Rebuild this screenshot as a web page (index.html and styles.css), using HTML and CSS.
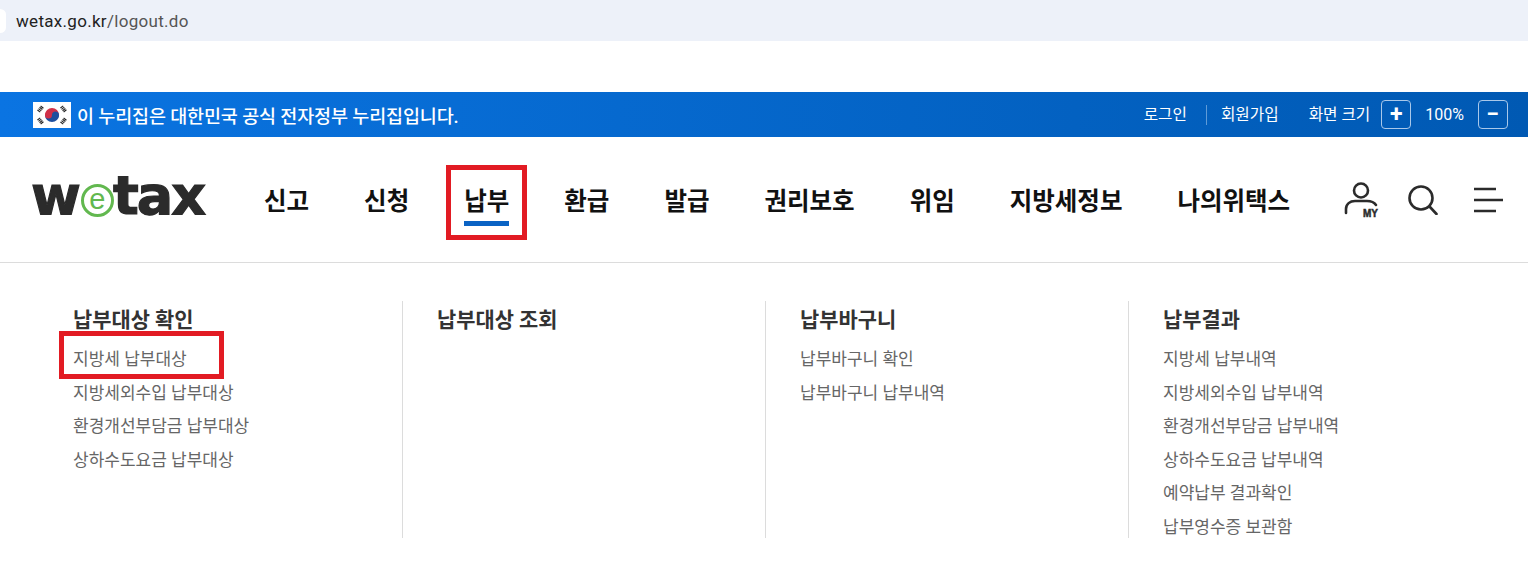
FILE: index.html
```html
<!DOCTYPE html>
<html lang="ko">
<head>
  <meta charset="UTF-8" />
  <title>wetax</title>
  <link rel="stylesheet" href="styles.css">
</head>
<body>
  <div class="addr">
    <span class="addr-dot"></span>
    <span class="addr-text">wetax.go.kr<span class="addr-path">/logout.do</span></span>
  </div>

  <div class="gov">
    <div class="gov-left">
      <svg class="flag" viewBox="0 0 38 26">
        <rect width="38" height="26" fill="#fff"/>
        <path d="M12 13a7 7 0 0 1 14 0z" fill="#d03048"/>
        <path d="M12 13a7 7 0 0 0 14 0z" fill="#1f4f9e"/>
        <circle cx="15.5" cy="13" r="3.5" fill="#d03048"/>
        <circle cx="22.5" cy="13" r="3.5" fill="#1f4f9e"/>
        <g stroke="#222" stroke-width="3.6" stroke-dasharray="1.1 .6">
          <path d="M5.5 9.5l4-5"/>
          <path d="M28.5 4.5l4 5"/>
          <path d="M5.5 16.5l4 5"/>
          <path d="M28.5 21.5l4-5"/>
        </g>
      </svg>
      <span class="gov-msg">이 누리집은 대한민국 공식 전자정부 누리집입니다.</span>
    </div>
    <div class="gov-right">
      <a class="gov-link">로그인</a>
      <span class="gov-sep"></span>
      <a class="gov-link">회원가입</a>
      <span class="zoom-label">화면 크기</span>
      <button class="zoom-btn">+</button>
      <span class="zoom-val">100%</span>
      <button class="zoom-btn">−</button>
    </div>
  </div>

  <header class="head">
    <div class="logo"><span>w</span><span class="logo-e">e</span><span class="logo-tax">tax</span></div>
    <nav class="gnb">
      <a>신고</a>
      <a>신청</a>
      <a class="on">납부<i class="mark mark-nav"></i></a>
      <a>환급</a>
      <a>발급</a>
      <a>권리보호</a>
      <a>위임</a>
      <a>지방세정보</a>
      <a>나의위택스</a>
    </nav>
    <div class="tools">
      <svg class="tool-my" viewBox="0 0 36 36" fill="none" stroke="#2b2b2b" stroke-width="2.6">
        <circle cx="17" cy="8.5" r="7"/>
        <path d="M2 31v-4c0-5 4-8 9-8h12c4 0 7 1 9 4" stroke-linecap="round"/>
        <text x="19" y="35" class="my-text">MY</text>
      </svg>
      <svg class="tool-search" viewBox="0 0 30 30" fill="none" stroke="#2b2b2b" stroke-width="2.6">
        <circle cx="13" cy="13" r="11.5"/>
        <path d="M21.5 21.5l7 7.5" stroke-linecap="round"/>
      </svg>
      <svg class="tool-menu" viewBox="0 0 30 26" fill="none" stroke="#2b2b2b" stroke-width="2.6">
        <path d="M1 2h22M1 13h29M1 24h22"/>
      </svg>
    </div>
  </header>

  <section class="sub">
    <div class="col">
      <h3>납부대상 확인</h3>
      <ul>
        <li><a class="boxed">지방세 납부대상<i class="mark mark-link"></i></a></li>
        <li><a>지방세외수입 납부대상</a></li>
        <li><a>환경개선부담금 납부대상</a></li>
        <li><a>상하수도요금 납부대상</a></li>
      </ul>
    </div>
    <div class="col">
      <h3>납부대상 조회</h3>
    </div>
    <div class="col">
      <h3>납부바구니</h3>
      <ul>
        <li><a>납부바구니 확인</a></li>
        <li><a>납부바구니 납부내역</a></li>
      </ul>
    </div>
    <div class="col">
      <h3>납부결과</h3>
      <ul>
        <li><a>지방세 납부내역</a></li>
        <li><a>지방세외수입 납부내역</a></li>
        <li><a>환경개선부담금 납부내역</a></li>
        <li><a>상하수도요금 납부내역</a></li>
        <li><a>예약납부 결과확인</a></li>
        <li><a>납부영수증 보관함</a></li>
      </ul>
    </div>
  </section>
</body>
</html>
```

FILE: styles.css
```css
* { margin:0; padding:0; box-sizing:border-box }
html, body { width:100%; height:100%; overflow:hidden }
body {
  background:#fff;
  font-family:"Roboto","Noto Sans CJK KR",sans-serif;
  color:#222;
}
a { color:inherit; text-decoration:none }
ul { list-style:none }

/* address bar */
.addr {
  height:41px; background:#edf1f9;
  display:flex; align-items:center; gap:10px;
  margin-bottom:51px;
}
.addr-dot { width:6px; height:24px; background:#fff; border-radius:0 14px 14px 0 / 0 12px 12px 0 }
.addr-text { font-size:17px; color:#222; font-family:"Roboto",sans-serif; letter-spacing:.3px }
.addr-path { color:#555 }

/* top blue bar */
.gov {
  height:45px; padding:0 20px 0 33px;
  background:linear-gradient(90deg,#0a74e2,#0059b3);
  color:#fff;
  display:flex; align-items:center; justify-content:space-between;
}
.gov-left { display:flex; align-items:center; gap:6px }
.flag { width:38px; height:26px; display:block }
.gov-msg { font-size:18.5px; font-weight:500; letter-spacing:-.15px }
.gov-right { display:flex; align-items:center; font-size:15.7px }
.gov-link { position:relative; top:-1px }
.gov-sep { width:1px; height:20px; background:#5f9bd8; margin:0 14px 0 19px }
.zoom-label { margin:0 11px 0 30px; position:relative; top:-1px }
.zoom-btn {
  width:30px; height:29px;
  background:transparent; color:#fff;
  border:1px solid #a9c8ea; border-radius:4px;
  font:700 23px/1 "Roboto",sans-serif;
  display:flex; align-items:center; justify-content:center;
}
.zoom-val { margin:0 14px; font-family:"Roboto",sans-serif; font-size:16px }

/* main header */
.head {
  height:126px; padding:0 25px 0 33px;
  border-bottom:1px solid #dcdcdc;
  display:flex; align-items:center;
}
.logo {
  width:231px; display:flex; align-items:center;
  font:700 54px/1 "DejaVu Sans",sans-serif;
  -webkit-text-stroke:1.2px #2b2b2b;
  color:#2b2b2b;
  margin:-8px 0 0 0; padding-left:0;
}
.logo span:first-child { margin-left:-2px }
.logo-e {
  width:33px; height:33px; margin:9px -1px 0 0; flex:none;
  border:3px solid #62b84f; border-radius:50%;
  color:#62b84f; -webkit-text-stroke:0;
  font:400 29px/24px "Liberation Sans",sans-serif;
  text-align:center;
}
.logo-tax { letter-spacing:-2px }
.gnb {
  display:flex; gap:55px;
  font-size:24.5px; font-weight:700; color:#111;
  margin-top:-1px;
}
.gnb a { position:relative; white-space:nowrap }
.gnb .on::after {
  content:""; position:absolute; left:0; right:0; bottom:-9px;
  height:5px; background:#0a63c4;
}
.tools { margin-left:auto; display:flex; align-items:center }
.tool-my { width:36px; height:36px; overflow:visible }
.my-text { font:900 10px "Liberation Sans",sans-serif; fill:#2b2b2b; stroke:#2b2b2b; stroke-width:.5 }
.tool-search { width:30px; height:30px; margin-left:28px }
.tool-menu { width:30px; height:26px; margin-left:35px }

/* sub menu */
.sub {
  display:grid; grid-template-columns:repeat(4,363px);
  margin:38px 0 0 39px;
}
.col { height:237px; padding:4px 0 0 34px; border-left:1px solid #dcdcdc }
.col:first-child { border-left:0 }
.col h3 { font-size:20.9px; font-weight:700; line-height:30px; color:#333; margin-bottom:8px }
.col li { font-size:17px; line-height:33.5px; color:#666; white-space:nowrap }

/* red annotation boxes */
.boxed { position:relative; display:inline-block }
.mark { position:absolute; border:5px solid #e21b23; pointer-events:none }
.mark-nav { left:-18px; right:-18px; top:-17px; bottom:-23px }
.mark-link { left:-14px; right:-37px; top:-12px; bottom:-2px }
```
